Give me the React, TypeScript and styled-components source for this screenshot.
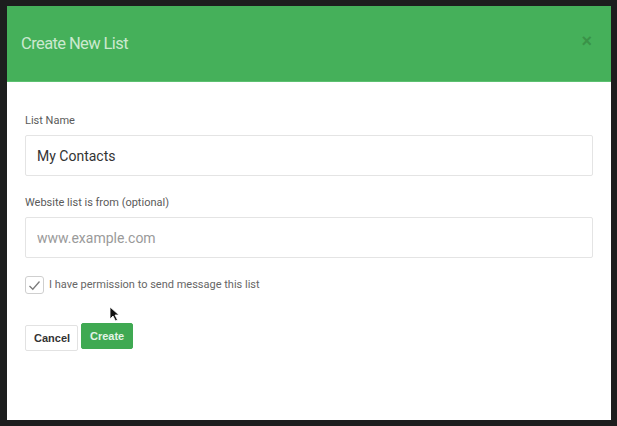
import { createGlobalStyle } from 'styled-components';
import styled from 'styled-components';

const GlobalStyle = createGlobalStyle`
  html, body {
    margin: 0;
    padding: 0;
    background: #1d1e1e;
    font-family: Roboto, "Liberation Sans", sans-serif;
  }
`;

const Page = styled.div`
  width: 617px;
  height: 426px;
  padding: 6px 6px 0 7px;
  box-sizing: border-box;
`;

const Modal = styled.div`
  position: relative;
  width: 604px;
  height: 414px;
  background: #fff;
  display: flex;
  flex-direction: column;
`;

const Header = styled.div`
  height: 76px;
  background: #45b05a;
  border-bottom: 1px solid #5cc070;
  box-sizing: border-box;
  display: flex;
  align-items: center;
  justify-content: space-between;
  padding: 0 19px 0 14px;
`;

const Title = styled.h2`
  margin: 0;
  font-size: 16.5px;
  font-weight: 400;
  color: #cbe9cf;
  letter-spacing: -0.6px;
`;

const Close = styled.span`
  font-size: 18px;
  font-weight: 700;
  color: #3a9248;
  font-family: "Liberation Sans", sans-serif;
  line-height: 1;
  margin-top: -6px;
`;

const Body = styled.div`
  padding: 32px 18px 0 18px;
  display: flex;
  flex-direction: column;
`;

const Label = styled.label<{ $top?: number }>`
  font-size: 11px;
  line-height: 14px;
  color: #5a5a5a;
  margin-top: ${p => p.$top ?? 0}px;
  margin-bottom: 7px;
`;

const Input = styled.input`
  height: 41px;
  width: 568px;
  box-sizing: border-box;
  border: 1px solid #e4e4e4;
  border-radius: 2px;
  padding: 0 11px;
  font-family: Roboto, "Liberation Sans", sans-serif;
  font-size: 14px;
  color: #333;
  outline: none;
  &::placeholder {
    color: #9a9a9a;
  }
`;

const CheckRow = styled.div`
  display: flex;
  align-items: center;
  gap: 5px;
  margin-top: 18px;
`;

const Box = styled.span`
  width: 19px;
  height: 18px;
  box-sizing: border-box;
  border: 1px solid #cfcfcf;
  border-radius: 3px;
  display: flex;
  align-items: center;
  justify-content: center;
`;

const CheckText = styled.span`
  font-size: 11px;
  color: #666;
  margin-top: -1px;
`;

const Actions = styled.div`
  display: flex;
  align-items: flex-start;
  gap: 3px;
  margin-top: 29px;
`;

const Button = styled.button<{ $primary?: boolean }>`
  height: 26px;
  padding: 0 8px;
  margin-top: ${p => (p.$primary ? 0 : 2)}px;
  width: ${p => (p.$primary ? 52 : 53)}px;
  font-family: "Liberation Sans", Arial, sans-serif;
  font-weight: 700;
  font-size: 11px;
  border-radius: 2px;
  cursor: pointer;
  border: 1px solid ${p => (p.$primary ? '#3fa952' : '#e2e2e2')};
  background: ${p => (p.$primary ? '#3fa952' : '#fff')};
  color: ${p => (p.$primary ? '#e3f4e6' : '#333')};
`;

const Pointer = styled.svg`
  position: absolute;
  left: 102px;
  top: 300px;
`;

export default function App() {
  return (
    <>
      <GlobalStyle />
      <Page>
        <Modal>
          <Header>
            <Title>Create New List</Title>
            <Close>×</Close>
          </Header>
          <Body>
            <Label>List Name</Label>
            <Input defaultValue="My Contacts" />
            <Label $top={20}>Website list is from (optional)</Label>
            <Input placeholder="www.example.com" />
            <CheckRow>
              <Box>
                <svg width="13" height="11" viewBox="0 0 13 11">
                  <path d="M1.5 6 L4.8 9.2 L11.5 1.5" fill="none" stroke="#7b7b7b" strokeWidth="1.3" />
                </svg>
              </Box>
              <CheckText>I have permission to send message this list</CheckText>
            </CheckRow>
            <Actions>
              <Button>Cancel</Button>
              <Button $primary>Create</Button>
            </Actions>
          </Body>
          <Pointer width="12" height="16" viewBox="0 0 12 16">
            <path d="M1 1 L1 13 L4 10 L6.5 15 L8.5 14 L6 9 L10 9 Z" fill="#111" stroke="#fff" strokeWidth="0.8" />
          </Pointer>
        </Modal>
      </Page>
    </>
  );
}
